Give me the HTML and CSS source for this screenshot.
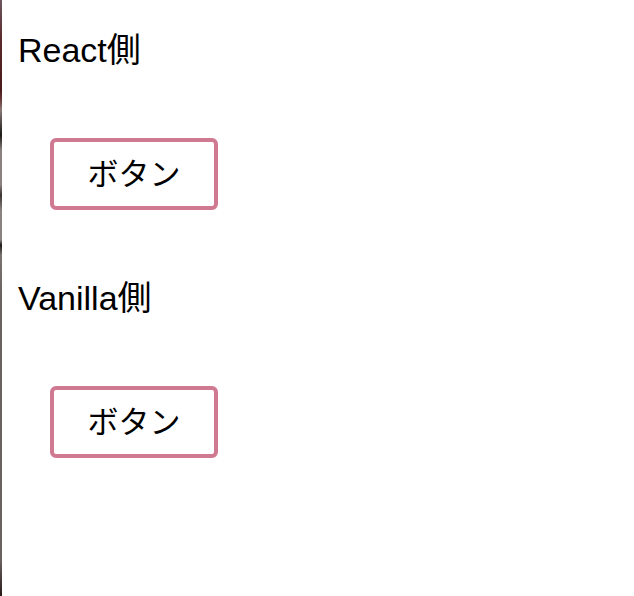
FILE: index.html
```html
<!DOCTYPE html>
<html lang="ja">
<head>
<meta charset="utf-8">
<title>React / Vanilla</title>
<link rel="stylesheet" href="styles.css">
</head>
<body>
<div class="frame">
  <div class="edge"></div>
  <main class="content">
    <section class="block">
      <p class="label">React側</p>
      <div class="btn-wrap"><button class="btn" type="button">ボタン</button></div>
    </section>
    <section class="block">
      <p class="label">Vanilla側</p>
      <div class="btn-wrap"><button class="btn" type="button">ボタン</button></div>
    </section>
  </main>
</div>
</body>
</html>
```
FILE: styles.css
```css
html, body {
  margin: 0;
  padding: 0;
  background: #ffffff;
}
body {
  font-family: "Liberation Sans", "Noto Sans CJK JP", sans-serif;
  color: #000000;
}
.frame {
  display: flex;
  min-height: 596px;
}
.edge {
  width: 2px;
  flex: none;
  background: linear-gradient(to bottom,
    #6e5660 0px, #5a2a2c 40px, #4a1a1a 90px, #6a3a3a 100px,
    #8a7a78 110px, #1a1a16 135px, #8a807e 150px, #8a807e 185px,
    #3a3430 195px, #8a8280 210px, #8a8280 240px, #1a1a18 245px,
    #7a7270 255px, #6a6260 300px, #6a6260 560px, #2a1a18 596px);
}
.content {
  flex: 1;
  padding: 32px 0 0 16px;
  display: flex;
  flex-direction: column;
  gap: 70px;
}
.block {
  display: flex;
  flex-direction: column;
}
.label {
  margin: 0;
  font-size: 34px;
  line-height: 37px;
  height: 37px;
}
.btn-wrap {
  margin-top: 69px;
  padding-left: 32px;
}
.btn {
  box-sizing: border-box;
  width: 168px;
  height: 72px;
  border: 4px solid #d07a92;
  border-radius: 6px;
  background: #ffffff;
  font-family: "Liberation Sans", "Noto Sans CJK JP", sans-serif;
  font-size: 31px;
  line-height: 1;
  color: #000000;
  padding: 0;
  margin: 0;
}
```
